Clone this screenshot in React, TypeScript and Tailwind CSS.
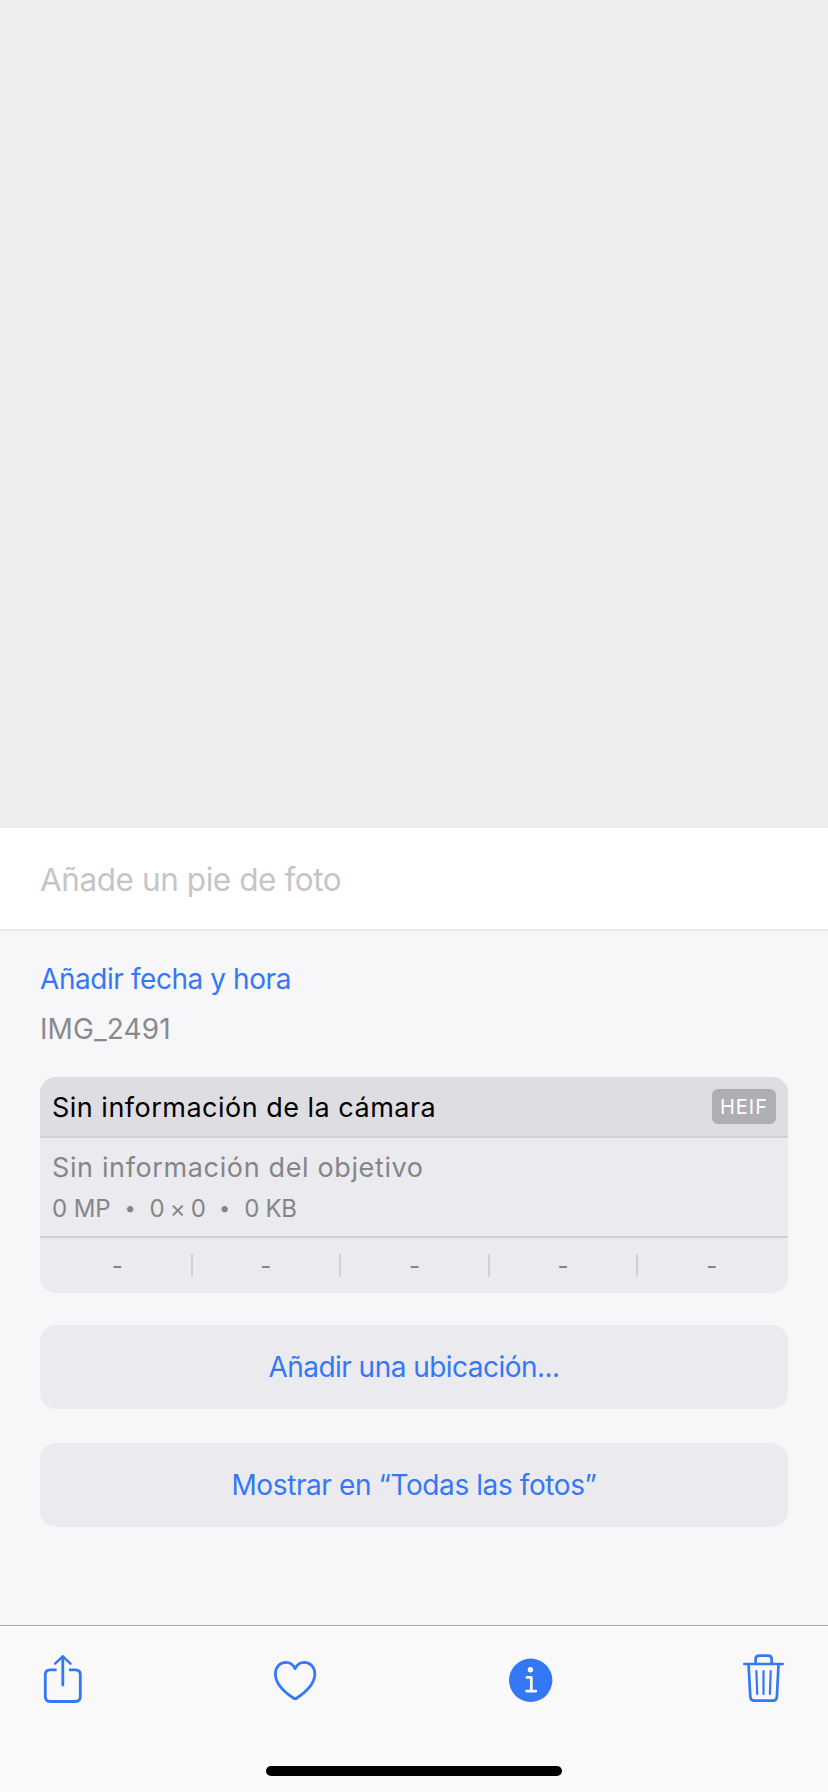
import React from "react";

const exposureSlots = ["iso", "focal", "ev", "aperture", "shutter"];

function ShareIcon() {
  return (
    <svg width="48" height="56" viewBox="0 0 48 56" fill="none" stroke="#3478f6" strokeWidth="2.8" strokeLinecap="round" strokeLinejoin="round">
      <path strokeLinecap="butt" d="M17.6 19.8H11.2Q6.3 19.8 6.3 24.7V46.6Q6.3 51.5 11.2 51.5H36.4Q41.3 51.5 41.3 46.6V24.7Q41.3 19.8 36.4 19.8H30" />
      <path d="M23.8 7V35" />
      <path d="M16.1 13.7L23.8 6.3L31.5 13.7" strokeWidth="2.4" />
    </svg>
  );
}

function HeartIcon() {
  return (
    <svg width="48" height="56" viewBox="0 0 48 56" fill="none" stroke="#3478f6" strokeWidth="2.8" strokeLinejoin="round">
      <path d="M22.1 18.6C20.2 14.8 16.8 12.4 12.9 12.4C6.8 12.4 2.4 17.2 2.4 23.9C2.4 33.2 10.8 41.6 20.4 48C21.7 48.9 22.5 48.9 23.8 48C33.4 41.6 41.8 33.2 41.8 23.9C41.8 17.2 37.4 12.4 31.3 12.4C27.4 12.4 24 14.8 22.1 18.6Z" />
    </svg>
  );
}

function InfoIcon() {
  return (
    <svg width="48" height="56" viewBox="0 0 48 56" fill="none">
      <circle cx="23.7" cy="30.3" r="21.7" fill="#3478f6" />
      <circle cx="23.4" cy="19.7" r="2.7" fill="#f9f9f9" />
      <path d="M20 27.4H24.3V41M19.6 41.1H28.8" stroke="#f9f9f9" strokeWidth="2.8" strokeLinecap="round" strokeLinejoin="round" />
    </svg>
  );
}

function TrashIcon() {
  return (
    <svg width="48" height="56" viewBox="0 0 48 56" fill="none" stroke="#3478f6" strokeWidth="2.7" strokeLinecap="round" strokeLinejoin="round">
      <path d="M3.3 14H41.7" />
      <path d="M14.6 13.5V9.3Q14.6 5.6 18.3 5.6H27Q30.7 5.6 30.7 9.3V13.5" />
      <path d="M7.6 14.5L9.3 46.9Q9.6 50.7 13.2 50.7H32Q35.6 50.7 35.9 46.9L37.5 14.5" />
      <path d="M15.4 21L16.2 44M22.5 21V44M29.7 21L28.9 44" strokeWidth="2.2" />
    </svg>
  );
}

function Dot() {
  return (
    <span className="flex w-[39px] items-center justify-center pb-[2px] text-[20px]">•</span>
  );
}

export default function App() {
  return (
    <div className="flex h-[1792px] w-[828px] flex-col overflow-hidden bg-[#f7f7f9] font-['Inter','Liberation_Sans',sans-serif] whitespace-nowrap">
      <div className="h-[828px] shrink-0 bg-[#ededed]" />

      <div className="flex h-[103px] shrink-0 items-center border-b-2 border-[#e9e9eb] bg-white pt-[2px] pl-10 text-[31.5px] tracking-[-0.43px] text-[#c5c5c7]">
        Añade un pie de foto
      </div>

      <main className="flex h-[694px] shrink-0 flex-col px-10 pt-[23px]">
        <a className="block text-[28px] leading-[50px] tracking-[-0.43px] text-[#3478f6]">Añadir fecha y hora</a>
        <p className="text-[28px] leading-[50px] tracking-[0.1px] text-[#8a8a8d]">IMG_2491</p>

        <section className="mt-[23px] h-[216px] shrink-0 overflow-hidden rounded-2xl bg-[#ebebef]">
          <header className="flex h-[61px] items-center justify-between border-b-2 border-[#d1d1d5] bg-[#dedde2] px-3 text-[27px] text-black">
            <span className="pt-[3px] tracking-[0.49px]">Sin información de la cámara</span>
            <span className="flex h-[35px] w-16 items-center justify-center rounded-md bg-[#aeaeb3] text-[20px] tracking-[1px] text-white">
              HEIF
            </span>
          </header>
          <div className="flex h-[100px] flex-col border-b-2 border-[#d1d1d5] px-3 pt-[9px] text-[#858589]">
            <span className="text-[27px] leading-[41px] tracking-[0.63px]">Sin información del objetivo</span>
            <div className="flex text-[24px] leading-[41px]">
              <span className="tracking-[-0.1px]">0 MP</span>
              <Dot />
              <span className="tracking-[-0.8px]">0 × 0</span>
              <Dot />
              <span className="tracking-[-0.3px]">0 KB</span>
            </div>
          </div>
          <div className="flex h-[55px] items-center pr-[3px] pl-1 text-[24px] text-[#858589]">
            {exposureSlots.map((slot, i) => (
              <React.Fragment key={slot}>
                {i > 0 && <span className="h-[23px] w-[2px] bg-[#d1d1d5]" />}
                <span className="flex flex-1 justify-center">-</span>
              </React.Fragment>
            ))}
          </div>
        </section>

        <button className="mt-8 h-[84px] shrink-0 rounded-2xl bg-[#ebebef] text-[28px] tracking-[-0.53px] text-[#3478f6]">
          Añadir una ubicación...
        </button>
        <button className="mt-[34px] h-[84px] shrink-0 rounded-2xl bg-[#ebebef] text-[28px] tracking-[-0.4px] text-[#3478f6]">
          Mostrar en “Todas las fotos”
        </button>
      </main>

      <footer className="flex h-[167px] shrink-0 flex-col items-center justify-between border-t border-[#a9a9ad] bg-[#f9f9f9] pt-6 pb-4">
        <nav className="flex w-full justify-between px-[39px]">
          <ShareIcon />
          <HeartIcon />
          <InfoIcon />
          <TrashIcon />
        </nav>
        <div className="h-[10px] w-[296px] rounded-full bg-black" />
      </footer>
    </div>
  );
}
